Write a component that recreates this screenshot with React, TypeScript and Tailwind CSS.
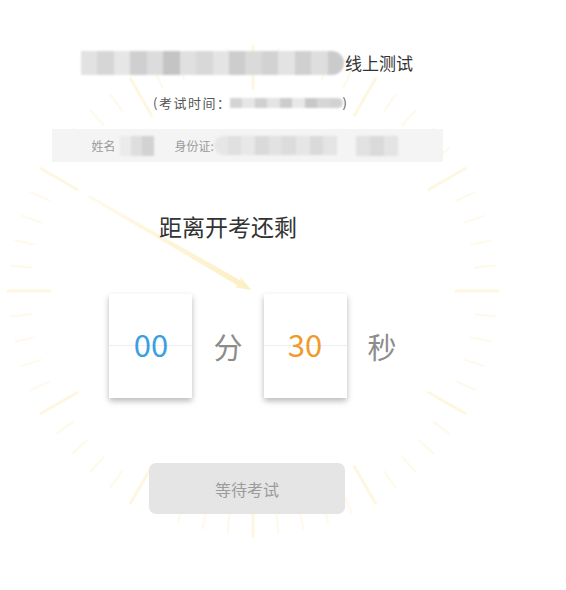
import React from "react";

const CX = 253;
const CY = 291;

function Dial() {
  const ticks = Array.from({ length: 60 }, (_, i) => {
    const a = (i * 6 * Math.PI) / 180;
    const long = i % 5 === 0;
    const r1 = long ? 203 : 223;
    const r2 = long ? 245 : 243;
    return (
      <line
        key={i}
        x1={CX + Math.sin(a) * r1}
        y1={CY - Math.cos(a) * r1}
        x2={CX + Math.sin(a) * r2}
        y2={CY - Math.cos(a) * r2}
        stroke="#fbe7a6"
        strokeOpacity={long ? 0.35 : 0.25}
        strokeWidth={long ? 3 : 2}
        strokeLinecap="round"
      />
    );
  });

  // minute hand pointing to 10 o'clock
  const ang = (-60 * Math.PI) / 180;
  const dx = Math.sin(ang);
  const dy = -Math.cos(ang);
  const nx = -dy;
  const ny = dx;
  const p = (r: number, w: number) =>
    `${CX + dx * r + nx * w},${CY + dy * r + ny * w}`;
  const hand = [p(2, 0), p(18, 6), p(16, 3), p(190, 1.3), p(190, -1.3), p(16, -3), p(18, -6)].join(" ");

  return (
    <svg className="absolute inset-0" width="566" height="590" viewBox="0 0 566 590">
      <defs>
        <linearGradient id="hand" x1={CX + dx * 190} y1={CY + dy * 190} x2={CX} y2={CY} gradientUnits="userSpaceOnUse">
          <stop offset="0" stopColor="#fdf0c4" stopOpacity="0.35" />
          <stop offset="1" stopColor="#fbe39a" stopOpacity="0.6" />
        </linearGradient>
      </defs>
      {ticks}
      <polygon points={hand} fill="url(#hand)" />
    </svg>
  );
}

function Mosaic({ shades, className }: { shades: string[]; className: string }) {
  return (
    <div className={"flex overflow-hidden blur-[1px] " + className}>
      {shades.map((c, i) => (
        <div key={i} className="flex-1 h-full" style={{ backgroundColor: c }} />
      ))}
    </div>
  );
}

function TimeCard({ value, color }: { value: string; color: string }) {
  return (
    <div className="relative w-[83px] h-[104px] bg-white shadow-[0_3px_6px_rgba(0,0,0,0.28)] flex items-center justify-center">
      <div className="absolute left-0 right-0 top-[51px] h-px bg-[#eeeeee]" />
      <span className={"relative text-[31px] leading-none -mt-[6px] " + color}>{value}</span>
    </div>
  );
}

export default function App() {
  return (
    <div className="relative w-[566px] h-[590px] bg-white overflow-hidden font-['Noto_Sans_CJK_SC',sans-serif]">
      <Dial />

      <div className="relative w-[494px] flex flex-col items-center pt-[51px]">
        {/* title */}
        <div className="flex items-center h-[24px]">
          <Mosaic
            className="w-[263px] h-[24px] rounded-r-full"
            shades={["#e2e2e2", "#d6d6d6", "#e6e6e6", "#cfcfcf", "#dcdcdc", "#c4c4c4", "#e0e0e0", "#d8d8d8", "#e4e4e4", "#cdcdcd", "#dadada", "#d2d2d2", "#e3e3e3", "#d0d0d0", "#dedede", "#cbcbcb"]}
          />
          <span className="ml-[1px] -mt-[2px] text-[17px] text-[#333] leading-none">线上测试</span>
        </div>

        <div className="flex items-center mt-[21px] ml-[6px] text-[13px] text-[#555] leading-none">
          <span className="tracking-[1.5px]">(考试时间：</span>
          <Mosaic
            className="w-[113px] h-[10px] rounded-r-full -ml-[2px]"
            shades={["#d4d4d4", "#e6e6e6", "#d0d0d0", "#e4e4e4", "#cccccc", "#e8e8e8", "#c8c8c8", "#d6d6d6", "#d2d2d2"]}
          />
          <span>)</span>
        </div>

        {/* info */}
        <div className="mt-[20px] w-[391px] h-[33px] bg-[#f4f4f4] flex items-center pl-[40px] text-[12px] text-[#9a9a9a]">
          <span>姓名</span>
          <Mosaic className="ml-[4px] w-[34px] h-[20px]" shades={["#ebebeb", "#dedede", "#d2d2d2"]} />
          <span className="ml-[21px]">身份证:</span>
          <Mosaic
            className="w-[123px] h-[19px] rounded-l-full"
            shades={["#e6e6e6", "#e0e0e0", "#e8e8e8", "#dadada", "#e2e2e2", "#dcdcdc", "#e6e6e6", "#dadada", "#e4e4e4"]}
          />
          <Mosaic className="ml-[19px] w-[42px] h-[20px]" shades={["#e2e2e2", "#dadada", "#e4e4e4"]} />
        </div>

        <div className="mt-[49px] mr-[38px] text-[23px] leading-[30px] text-[#333]">距离开考还剩</div>

        {/* countdown */}
        <div className="mt-[53px] ml-[12px] flex items-center gap-[21px]">
          <TimeCard value="00" color="text-[#3a9fe2]" />
          <span className="text-[29px] text-[#8c8c8c] leading-none">分</span>
          <TimeCard value="30" color="text-[#f09a2e]" />
          <span className="text-[29px] text-[#8c8c8c] leading-none">秒</span>
        </div>

        <button className="mt-[65px] w-[196px] h-[51px] rounded-[7px] bg-[#e5e5e5] text-[16px] text-[#9b9b9b]">
          等待考试
        </button>
      </div>
    </div>
  );
}
